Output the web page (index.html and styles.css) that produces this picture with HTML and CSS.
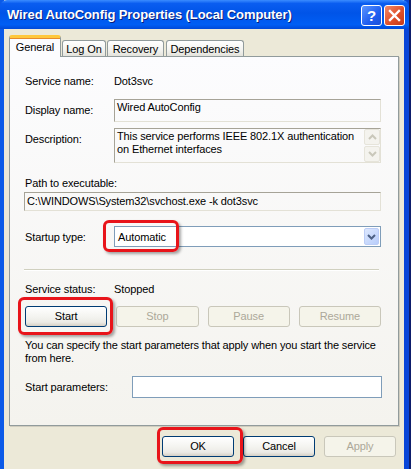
FILE: index.html
```html
<!DOCTYPE html>
<html lang="en">
<head>
    <meta charset="UTF-8">
    <title>Wired AutoConfig Properties (Local Computer)</title>
    <link rel="stylesheet" href="styles.css">
</head>
<body>
    <div class="window">
        <div class="titlebar">
            <span class="title">Wired AutoConfig Properties (Local Computer)</span>
            <div class="caption-buttons">
                <span class="cap-btn help">?</span>
                <span class="cap-btn close">
                    <svg width="13" height="13" viewBox="0 0 13 13"><path d="M2 2 L11 11 M11 2 L2 11" stroke="#fff" stroke-width="2.4" stroke-linecap="square"/></svg>
                </span>
            </div>
        </div>

        <div class="dialog">
            <div class="tabs">
                <span class="tab active">General</span>
                <span class="tab logon">Log On</span>
                <span class="tab recovery">Recovery</span>
                <span class="tab deps">Dependencies</span>
            </div>

            <div class="panel">
                <div class="row first">
                    <span class="label">Service name:</span>
                    <span>Dot3svc</span>
                </div>
                <div class="row display-row">
                    <span class="label top">Display name:</span>
                    <div class="readonly display-box">Wired AutoConfig</div>
                </div>
                <div class="row desc-row">
                    <span class="label top">Description:</span>
                    <div class="readonly desc-box">
                        <div class="desc-text">This service performs IEEE 802.1X authentication on Ethernet interfaces</div>
                        <div class="scroll">
                            <span class="arrow"><svg width="9" height="6" viewBox="0 0 9 6"><path d="M1 5 L4.5 1.5 L8 5" fill="none" stroke="#c9c7ba" stroke-width="2"/></svg></span>
                            <span class="arrow"><svg width="9" height="6" viewBox="0 0 9 6"><path d="M1 1 L4.5 4.5 L8 1" fill="none" stroke="#c9c7ba" stroke-width="2"/></svg></span>
                        </div>
                    </div>
                </div>
                <div class="path-label">Path to executable:</div>
                <div class="readonly path-box">C:\WINDOWS\System32\svchost.exe -k dot3svc</div>
                <div class="row startup-row">
                    <span class="label">Startup type:</span>
                    <div class="combo">
                        <span>Automatic</span>
                        <span class="drop"><svg width="9" height="6" viewBox="0 0 9 6"><path d="M1 1 L4.5 4.5 L8 1" fill="none" stroke="#4d6185" stroke-width="2"/></svg></span>
                    </div>
                </div>
                <div class="separator"></div>
                <div class="row status-row">
                    <span class="label">Service status:</span>
                    <span>Stopped</span>
                </div>
                <div class="service-buttons">
                    <span class="btn">Start</span>
                    <span class="btn disabled">Stop</span>
                    <span class="btn disabled">Pause</span>
                    <span class="btn disabled">Resume</span>
                </div>
                <p class="hint">You can specify the start parameters that apply when you start the service from here.</p>
                <div class="row params-row">
                    <span class="label wide">Start parameters:</span>
                    <div class="edit"></div>
                </div>
            </div>

            <div class="footer">
                <span class="btn">OK</span>
                <span class="btn">Cancel</span>
                <span class="btn disabled">Apply</span>
            </div>
        </div>

        <div class="highlight hl-startup"></div>
        <div class="highlight hl-start"></div>
        <div class="highlight hl-ok"></div>
    </div>
</body>
</html>
```

FILE: styles.css
```css
body {
    margin: 0;
    padding: 0;
    background: #ffffff;
    font-family: "Liberation Sans", Arial, sans-serif;
    font-size: 11px;
    letter-spacing: -0.12px;
    color: #000;
}

.window {
    position: relative;
    width: 400px;
    height: 440px;
    background: #ece9d8;
    border-left: 4px solid #0b5ae8;
    border-right: 5px solid #0845d8;
    border-bottom: 5px solid #0a30c8;
    padding-top: 29px;
    box-shadow: 2px 0 0 #0d1d6b;
}

/* Title bar */
.titlebar {
    position: absolute;
    top: 0;
    left: -4px;
    right: -5px;
    height: 29px;
    border-radius: 7px 7px 0 0;
    background: linear-gradient(#3b8cff 0%, #0a5df0 12%, #0054e8 45%, #005ef4 85%, #0049d8 100%);
    display: flex;
    align-items: center;
    justify-content: space-between;
    padding: 0 4px 0 7px;
    box-sizing: border-box;
}

.title {
    color: #fff;
    font-weight: bold;
    font-size: 13px;
    text-shadow: 1px 1px 0 #0a1e7a;
    letter-spacing: -0.1px;
}

.caption-buttons {
    display: flex;
    gap: 2px;
    margin-top: 1px;
}

.cap-btn {
    width: 19px;
    height: 19px;
    border: 1px solid #fff;
    border-radius: 3px;
    display: flex;
    align-items: center;
    justify-content: center;
    color: #fff;
    font-weight: bold;
    font-size: 15px;
}

.help {
    background: linear-gradient(135deg, #5c96ff, #1f5ef0 60%, #1a4fd8);
}

.close {
    background: linear-gradient(135deg, #f08a6a, #e0502a 55%, #c43a18);
}

/* Dialog body */
.dialog {
    padding: 7px 5px 0 5px;
}

.tabs {
    display: flex;
    align-items: flex-end;
    height: 20px;
    position: relative;
    z-index: 1;
}

.tab {
    height: 15px;
    line-height: 16px;
    white-space: nowrap;
    text-align: center;
    border: 1px solid #919b9c;
    border-bottom: none;
    border-radius: 3px 3px 0 0;
    background: linear-gradient(#ffffff, #f3f3ef 60%, #e4e3dc);
    margin-right: 1px;
}

.logon { width: 42px; }
.recovery { width: 55px; }
.deps { width: 76px; margin-left: 1px; }

.tab.active {
    width: 50px;
    height: 19px;
    line-height: 18px;
    background: #fcfcfe;
    border-top: 3px solid #ffc83c;
    box-shadow: inset 0 1px 0 #e68b2c;
    margin-bottom: -1px;
}

.panel {
    height: 368px;
    border: 1px solid #919b9c;
    background: linear-gradient(#fcfcfe, #f4f3ee);
    padding: 0 17px 0 15px;
    box-shadow: 1px 1px 0 #d0cdbf;
}

.row {
    display: flex;
    align-items: center;
}

.label {
    width: 89px;
    flex-shrink: 0;
}

.label.top {
    align-self: flex-start;
    padding-top: 5px;
}

.label.wide {
    width: 107px;
}

.first {
    padding-top: 17px;
    height: 13px;
}

.readonly {
    border: 1px solid;
    border-color: #a6a397 #e3e1d6 #e3e1d6 #a6a397;
    box-sizing: border-box;
}

.display-row {
    margin-top: 12px;
}

.display-box {
    flex: 1;
    height: 23px;
    padding: 0 2px;
    line-height: 14px;
}

.desc-row {
    margin-top: 6px;
}

.desc-box {
    flex: 1;
    height: 35px;
    display: flex;
}

.desc-text {
    flex: 1;
    padding: 1px 2px;
    line-height: 13px;
}

.scroll {
    width: 16px;
    display: flex;
    flex-direction: column;
    justify-content: space-between;
}

.arrow {
    height: 16px;
    border: 1px solid #e6e4da;
    border-radius: 2px;
    background: #f4f3ee;
    box-sizing: border-box;
    display: flex;
    align-items: center;
    justify-content: center;
}

.path-label {
    margin-top: 14px;
    line-height: 13px;
}

.path-box {
    margin-top: 2px;
    height: 19px;
    line-height: 17px;
    padding: 0 2px;
    margin-left: -1px;
}

.startup-row {
    margin-top: 15px;
}

.combo {
    flex: 1;
    height: 21px;
    border: 1px solid #7f9db9;
    background: #fff;
    box-sizing: border-box;
    display: flex;
    align-items: center;
    justify-content: space-between;
    padding: 0 1px 0 3px;
}

.drop {
    width: 15px;
    height: 17px;
    border-radius: 2px;
    background: linear-gradient(135deg, #dde8fe, #b8cdfb);
    border: 1px solid #bccdf6;
    box-sizing: border-box;
    display: flex;
    align-items: center;
    justify-content: center;
}

.separator {
    margin-top: 22px;
    height: 1px;
    background: #d0d0bf;
    border-bottom: 1px solid #fff;
    margin-right: 2px;
    margin-left: -1px;
}

.status-row {
    margin-top: 11px;
    height: 13px;
}

.service-buttons {
    margin-top: 11px;
    display: grid;
    grid-template-columns: repeat(4, 1fr);
    gap: 9px;
}

.btn {
    height: 21px;
    line-height: 19px;
    text-align: center;
    border: 1px solid #003c74;
    border-radius: 3px;
    background: linear-gradient(#ffffff, #f4f4f0 50%, #ecebe6 80%, #d6d0c5);
    box-sizing: border-box;
}

.btn.disabled {
    border-color: #c9c7ba;
    background: #f5f4ea;
    color: #aca899;
}

.hint {
    margin: 12px 0 0 0;
    line-height: 13px;
}

.params-row {
    margin-top: 11px;
}

.edit {
    flex: 1;
    height: 22px;
    border: 1px solid #7f9db9;
    background: #fff;
    box-sizing: border-box;
    margin-right: -1px;
}

.footer {
    display: flex;
    justify-content: flex-end;
    gap: 9px;
    margin-top: 10px;
    padding-right: 3px;
}

.footer .btn {
    width: 72px;
}

/* red callouts drawn over the screenshot */
.highlight {
    position: absolute;
    border: 3px solid #e8141a;
    border-radius: 6px;
    box-shadow: 2px 2px 3px rgba(0, 0, 0, 0.35);
    box-sizing: border-box;
}

.hl-startup { left: 99px; top: 220px; width: 76px; height: 32px; }
.hl-start { left: 14px; top: 297px; width: 95px; height: 38px; }
.hl-ok { left: 153px; top: 427px; width: 86px; height: 37px; }
```
